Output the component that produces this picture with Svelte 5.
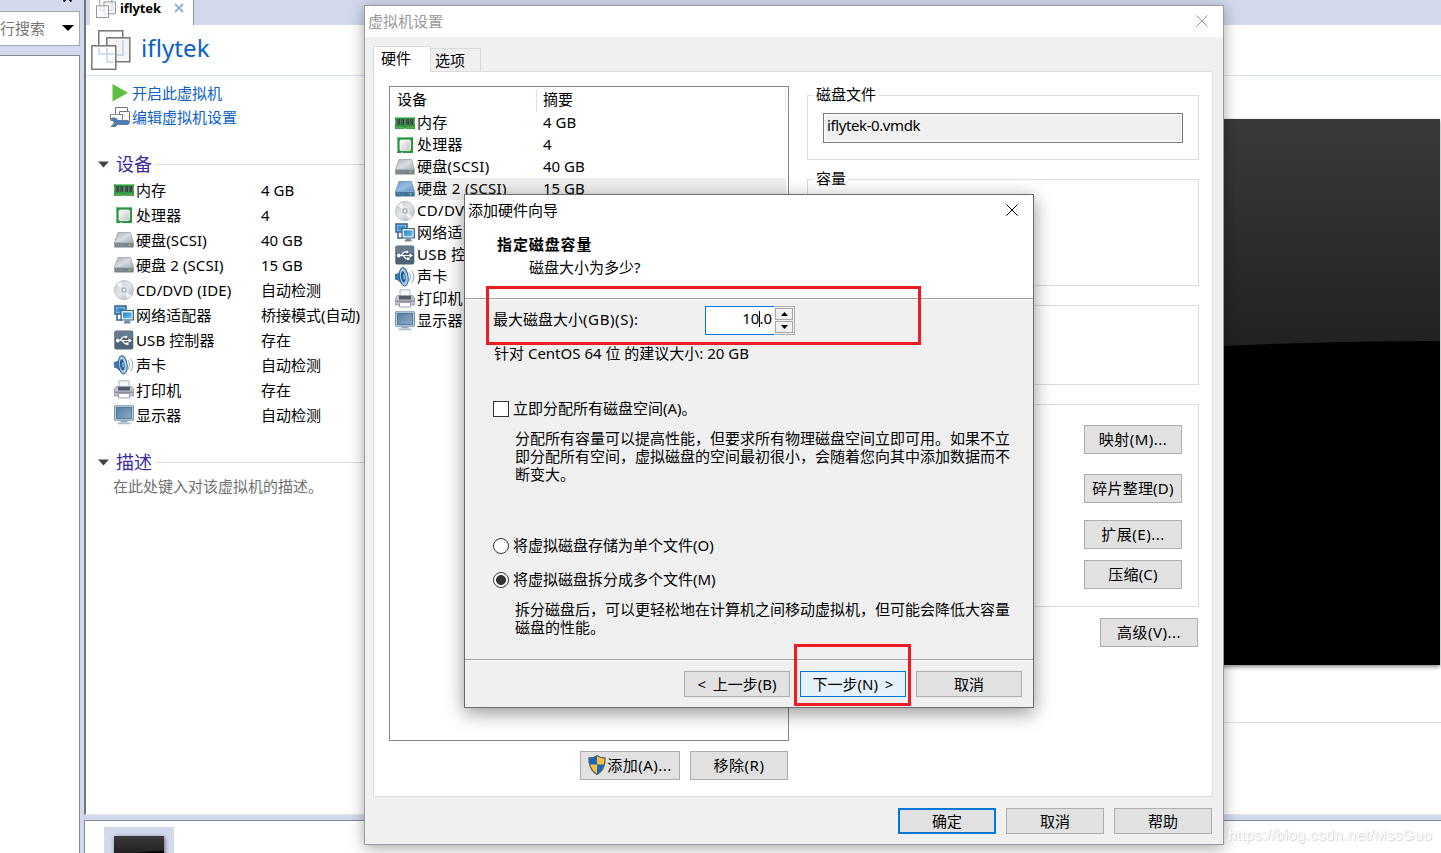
<script>
  const devices = [
    { icon: 'memory', name: '内存', summary: '4 GB' },
    { icon: 'cpu', name: '处理器', summary: '4' },
    { icon: 'disk', name: '硬盘(SCSI)', summary: '40 GB' },
    { icon: 'disk', name: '硬盘 2 (SCSI)', summary: '15 GB', selected: true },
    { icon: 'cd', name: 'CD/DVD (IDE)', summary: '自动检测' },
    { icon: 'network', name: '网络适配器', summary: '桥接模式(自动)' },
    { icon: 'usb', name: 'USB 控制器', summary: '存在' },
    { icon: 'sound', name: '声卡', summary: '自动检测' },
    { icon: 'printer', name: '打印机', summary: '存在' },
    { icon: 'display', name: '显示器', summary: '自动检测' }
  ]

  let allocateNow = $state(false)
  let layout = $state('split')
</script>

{#snippet vmIcon()}
  <svg class="vm-icon" viewBox="0 0 40 40" fill="#fff" stroke="#777" stroke-width="1.5">
    <rect x="7.8" y=".8" width="24" height="24" />
    <rect x="15.8" y="7.8" width="23" height="24" fill="#f4f4f4" />
    <path d="M32 10v15h-6" fill="none" stroke="#b9cde6" />
    <rect x=".8" y="15.8" width="24" height="23.5" fill="#fdfdfd" />
    <path d="M8 18v6h15M16 18v14h7" fill="none" stroke="#c3d5ea" />
  </svg>
{/snippet}

{#snippet closeIcon()}
  <svg class="close-icon" viewBox="0 0 12 12" fill="none" stroke="currentColor"><path d="M.4.4l11.2 11.2M11.6.4L.4 11.6" /></svg>
{/snippet}

{#snippet deviceIcon(name, selected)}
  <svg class="device-icon" viewBox="0 0 20 20">
    {#if name === 'memory'}
      <path d="M0 4h20v4l-.7 1 .7 1v6H11l-1-1-1 1H0v-6l.7-1-.7-1z" fill="#2f9a46" />
      <path d="M.5 4.5h19" stroke="#7fce83" />
      <path d="M2 6h3v6H2zM6 6h3v6H6zM11 6h3v6h-3zM15 6h3v6h-3z" fill="#3c3f42" />
      <path d="M3 6v6M7 6v6M12 6v6M16 6v6" stroke="#777" stroke-width=".6" />
      <path d="M1.5 14.8h7M11.5 14.8h7" stroke="#d9c463" stroke-dasharray="1 1" />
    {:else if name === 'cpu'}
      <path d="M2 2h16v16H8l-1-1-1 1H2z" fill="#2c9444" />
      <path d="M2.5 17V2.5h15" fill="none" stroke="#71c77d" />
      <rect x="5" y="5" width="10.5" height="10.5" rx="1" fill="url(#cpu-face)" stroke="#f8f8f8" stroke-width=".8" />
    {:else if name === 'disk'}
      <path d="M4 2.500h12.500l3 10H.5z" fill={selected ? 'url(#disk-blue)' : 'url(#disk-grey)'} stroke={selected ? '#5484ad' : '#9298a0'} stroke-width=".7" />
      <path d="M.3 12.300h19.400v5.200H.3z" fill={selected ? '#3c6f9b' : '#7b828b'} />
      <path d="M.5 12.600h19" stroke={selected ? '#9cc2e0' : '#bec4ca'} stroke-width=".7" />
      <path d="M2 15h7" stroke={selected ? '#6c9fc6' : '#9ea4ab'} stroke-dasharray="1 1" />
      <circle cx="15.500" cy="15" r="1" fill="#8fe04e" />
    {:else if name === 'cd'}
      <circle cx="10" cy="10" r="9.5" fill="url(#cd-face)" stroke="#a9b0b8" stroke-width=".7" />
      <path d="M10 10L2.5 4.5A9 9 0 0 1 7 1.5zM10 10l7.5 5.5a9 9 0 0 1-4.500 3z" fill="#fff" opacity=".75" />
      <circle cx="10" cy="10" r="3.8" fill="#c0c8d0" stroke="#e9edf1" />
      <circle cx="10" cy="10" r="1.700" fill="#fff" stroke="#87909a" stroke-width=".6" />
    {:else if name === 'network'}
      <path d="M1 1h11v8H1z" fill="#a8d3f1" stroke="#2a5f8f" stroke-width="1.500" />
      <path d="M2.500 2.500h8v5h-8z" fill="#3f8fcc" />
      <path d="M3 9v6h5" fill="none" stroke="#35658e" stroke-width="1.500" />
      <path d="M7 5.500h12.300v9.500H7z" fill="#d9effc" stroke="#3c5e7c" stroke-width="1.200" />
      <path d="M9 7.500h8.500v5.700H9z" fill="url(#screen-blue)" />
      <path d="M9.500 18.500h7.500l-1.500-3h-4.500z" fill="#77899b" />
    {:else if name === 'usb'}
      <rect x=".3" y=".5" width="19" height="19" rx="2" fill="#4c6378" />
      <path d="M.8 8V2.500q0-1.500 1.500-1.500h15q1.500 0 1.500 1.500V8z" fill="#657c91" />
      <path d="M3 10.500h12M6 10.500l3-3.500h2.500M8 10.500l3 3.200h2" fill="none" stroke="#fff" stroke-width="1.200" />
      <path d="M14.500 8.200l3.500 2.300-3.500 2.300z" fill="#fff" />
      <circle cx="3.800" cy="10.500" r="1.900" fill="#fff" />
      <circle cx="12" cy="7" r="1.300" fill="#fff" />
      <path d="M12 12.500h2.500V15H12z" fill="#fff" />
    {:else if name === 'sound'}
      <path d="M0 7l3-.8L9 .5V19l-6-5.500-3-1z" fill="#3e78a6" />
      <ellipse cx="8.800" cy="9.800" rx="4.300" ry="9.200" fill="#a9cdea" stroke="#315f88" transform="rotate(-8 9 10)" />
      <ellipse cx="8.300" cy="9.800" rx="2.300" ry="5.600" fill="#245a8b" transform="rotate(-8 9 10)" />
      <ellipse cx="9" cy="9.800" rx="1.200" ry="3" fill="#67add9" />
      <path d="M14.300 5.500q3 4.300 0 8.600M16.500 3.500q4.600 6.300 0 12.600" fill="none" stroke="#8ca8c4" />
    {:else if name === 'printer'}
      <path d="M5 .8h10V8H5z" fill="#f3f8ff" stroke="#9ba4b6" stroke-width=".8" />
      <path d="M2.500 6.500h15L19.600 9v7H.4V9z" fill="#c4c5d2" stroke="#8f91a0" stroke-width=".8" />
      <path d="M4 7h12v3.500H4z" fill="#555868" />
      <path d="M1 11.500h18v1.500H1z" fill="#8a8d9c" />
      <path d="M4.500 13.500h11V18h-11z" fill="#fafaff" stroke="#8d8fa2" stroke-width=".8" />
      <path d="M16.500 9.500h2" stroke="#7ad37b" />
    {:else}
      <path d="M.6.8h18.800v14.400H.6z" fill="#c9d8e5" stroke="#6e8fac" />
      <path d="M2.500 2.500h15v11h-15z" fill="url(#screen-slate)" stroke="#436a8d" stroke-width=".8" />
      <path d="M6.500 15.500h7v2h-7z" fill="#8eabc4" />
      <path d="M3.500 17.500h13v1.800h-13z" fill="#a9c0d3" />
    {/if}
  </svg>
{/snippet}

<svg class="defs" aria-hidden="true">
  <defs>
    <linearGradient id="cpu-face" x2="1" y2="1"><stop stop-color="#fff" /><stop offset="1" stop-color="#c4c4c4" /></linearGradient>
    <linearGradient id="disk-grey" x2="1" y2="1"><stop stop-color="#a9afb6" /><stop offset=".5" stop-color="#d9dde1" /><stop offset="1" stop-color="#a6acb4" /></linearGradient>
    <linearGradient id="disk-blue" x2="1" y2="1"><stop stop-color="#6a9cc8" /><stop offset=".5" stop-color="#94bde0" /><stop offset="1" stop-color="#5e93c0" /></linearGradient>
    <linearGradient id="cd-face" x2="1" y2="1"><stop stop-color="#c2c8ce" /><stop offset=".5" stop-color="#e3e7eb" /><stop offset="1" stop-color="#a8b0b9" /></linearGradient>
    <linearGradient id="screen-blue" x2="1" y2="1"><stop stop-color="#2b7fc2" /><stop offset="1" stop-color="#6cc2ee" /></linearGradient>
    <linearGradient id="screen-slate" x2="1" y2="1"><stop stop-color="#587fa2" /><stop offset="1" stop-color="#8dabc5" /></linearGradient>
    <linearGradient id="glass" x2="0" y2="1"><stop stop-color="#3a3a3a" /><stop offset="1" stop-color="#1e1e1e" /></linearGradient>
  </defs>
</svg>

<div class="desktop">
  <aside class="library">
    <div class="library-top">
      <svg width="9" height="9" viewBox="0 0 9 9" stroke="#000" stroke-width="1.800"><path d="M.5.5l8 8M8.500.5l-8 8" /></svg>
    </div>
    <div class="search">
      <span>行搜索</span>
      <svg width="12" height="6" viewBox="0 0 12 6"><path d="M0 0h12L6 6z" /></svg>
    </div>
    <div class="tree"></div>
  </aside>

  <main class="workspace">
    <div class="tab-strip">
      <div class="vm-tab">
        {@render vmIcon()}
        <span>iflytek</span>
        <svg class="tab-close" viewBox="0 0 10 10" stroke="#8fb1cf" stroke-width="2"><path d="M1 1l8 8M9 1L1 9" /></svg>
      </div>
    </div>

    <div class="view">
      <header class="view-header">
        {@render vmIcon()}
        <h1>iflytek</h1>
      </header>
      <div class="view-body">
        <div class="details">
          <div class="actions">
            <a href="#start"><svg width="20" height="20" viewBox="0 0 20 20"><path d="M2.500 1L18 9.800 2.500 18.600z" fill="#5fbf40" /></svg>开启此虚拟机</a>
            <a href="#edit">
              <svg width="20" height="20" viewBox="0 0 20 20" fill="#fff" stroke="#777">
                <path d="M5.500.5h12v10h-12z" />
                <path d="M9.500 4.500h10v11h-10z" fill="#f7f7f7" />
                <path d="M.5 7.500h12v6H.5z" stroke="#8b8b8b" />
                <path d="M1 11.500q5.500-1.500 6.500 2h10q1.500 0 1.500 2t-1.500 2H7.500q-1.500 3-6.500 2l3-2.500q1-1.500-.5-2.500z" fill="#4a7db5" />
                <path d="M1 11.500q5.500-1.500 6.500 2h10q1.500 0 1.500 2t-1.500 2H7.500q-1.500 3-6.500 2l3-2.500q1-1.500-.5-2.500z" fill="none" stroke="#4a7db5" stroke-width=".6" />
              </svg>编辑虚拟机设置</a>
          </div>
          <section class="section">
            <h2><svg width="11" height="7" viewBox="0 0 11 7"><path d="M0 .5h11L5.500 6.500z" fill="#444" /></svg><span>设备</span></h2>
            {#each devices as device}
              <div class="device">
                {@render deviceIcon(device.icon, false)}
                <span class="device-name">{device.name}</span>
                <span>{device.summary}</span>
              </div>
            {/each}
          </section>
          <section class="section description">
            <h2><svg width="11" height="7" viewBox="0 0 11 7"><path d="M0 .5h11L5.500 6.500z" fill="#444" /></svg><span>描述</span></h2>
            <p>在此处键入对该虚拟机的描述。</p>
          </section>
        </div>
        <div class="preview">
          <svg class="vm-screen" viewBox="0 0 640 546">
            <path d="M0 0h640v546H0z" />
            <path d="M0 0h640v222Q350 222 0 260z" fill="url(#glass)" />
          </svg>
        </div>
      </div>
    </div>

    <div class="thumbnails">
      <div class="thumb">
        <svg width="50" height="40" viewBox="0 0 50 40"><path d="M0 0h50v40H0z" /><path d="M0 0h50v15Q28 15 0 20z" fill="url(#glass)" /></svg>
      </div>
    </div>
  </main>

  <div class="window settings">
    <div class="title-bar"><span>虚拟机设置</span>{@render closeIcon()}</div>
    <div class="settings-body">
      <div class="tabs">
        <div class="tab active">硬件</div>
        <div class="tab">选项</div>
      </div>
      <div class="page">
        <div class="hardware">
          <div class="device-list">
            <div class="list-head"><span>设备</span><span>摘要</span></div>
            {#each devices as device}
              <div class="list-row">
                {@render deviceIcon(device.icon, device.selected)}
                <div class="cells" class:selected={device.selected}>
                  <span>{device.name}</span>
                  <span>{device.summary}</span>
                </div>
              </div>
            {/each}
          </div>
          <div class="list-buttons">
            <button class="btn add">
              <svg width="18" height="20" viewBox="0 0 18 20">
                <path d="M9 .7Q5.500 3 1 3q-.3 12 8 16.300Q17.300 15 17 3q-4.500 0-8-2.300z" fill="#f8bf3b" />
                <path d="M9 .7Q5.500 3 1 3q0 3.500.8 6.500H9zM9 9.500h7.200q-1.700 6.700-7.200 9.800z" fill="#1767c0" />
                <path d="M9 .7Q5.500 3 1 3q-.3 12 8 16.300Q17.300 15 17 3q-4.500 0-8-2.300z" fill="none" stroke="#5a6068" stroke-width="1.300" />
              </svg>添加(A)...</button>
            <button class="btn">移除(R)</button>
          </div>
        </div>

        <div class="properties">
          <fieldset class="file">
            <legend>磁盘文件</legend>
            <div class="file-name">iflytek-0.vmdk</div>
          </fieldset>
          <fieldset class="capacity"><legend>容量</legend></fieldset>
          <fieldset class="info"></fieldset>
          <fieldset class="tools">
            <button class="btn">映射(M)...</button>
            <button class="btn">碎片整理(D)</button>
            <button class="btn">扩展(E)...</button>
            <button class="btn">压缩(C)</button>
          </fieldset>
          <button class="btn advanced">高级(V)...</button>
        </div>
      </div>
      <div class="settings-footer">
        <button class="btn default">确定</button>
        <button class="btn">取消</button>
        <button class="btn">帮助</button>
      </div>
    </div>
  </div>

  <div class="window wizard">
    <div class="title-bar"><span>添加硬件向导</span>{@render closeIcon()}</div>
    <div class="wizard-head">
      <h3>指定磁盘容量</h3>
      <p>磁盘大小为多少?</p>
    </div>
    <div class="wizard-body">
      <div class="size-row">
        <span class="size-label">最大磁盘大小<span>(GB)(S):</span></span>
        <div class="spinner">
          <div class="value"><span>10<i></i>.0</span></div>
          <div class="steps">
            <button aria-label="增大"><svg width="7" height="4" viewBox="0 0 7 4"><path d="M3.500 0L7 4H0z" /></svg></button>
            <button aria-label="减小"><svg width="7" height="4" viewBox="0 0 7 4"><path d="M0 0h7L3.500 4z" /></svg></button>
          </div>
        </div>
      </div>
      <p class="hint">针对 CentOS 64 位 的建议大小: 20 GB</p>
      <label class="check"><input type="checkbox" bind:checked={allocateNow} /><span>立即分配所有磁盘空间(A)。</span></label>
      <p class="note">分配所有容量可以提高性能，但要求所有物理磁盘空间立即可用。如果不立<br />即分配所有空间，虚拟磁盘的空间最初很小，会随着您向其中添加数据而不<br />断变大。</p>
      <label class="radio first"><input type="radio" value="single" bind:group={layout} /><span>将虚拟磁盘存储为单个文件(O)</span></label>
      <label class="radio"><input type="radio" value="split" bind:group={layout} /><span>将虚拟磁盘拆分成多个文件(M)</span></label>
      <p class="note last">拆分磁盘后，可以更轻松地在计算机之间移动虚拟机，但可能会降低大容量<br />磁盘的性能。</p>
    </div>
    <div class="wizard-footer">
      <button class="btn">&lt; 上一步(B)</button>
      <button class="btn focus">下一步(N) &gt;</button>
      <button class="btn">取消</button>
    </div>
  </div>

  <div class="mark mark-size"></div>
  <div class="mark mark-next"></div>
  <div class="watermark">https://blog.csdn.net/MssGuo</div>
</div>

<style>
  :global(body) {
    margin: 0;
    overflow: hidden;
  }

  .desktop {
    position: relative;
    display: flex;
    gap: 4px;
    width: 1441px;
    height: 853px;
    overflow: hidden;
    background: #d3d9ed;
    color: #000;
    font-family: 'Noto Sans', 'Noto Sans CJK SC', sans-serif;
    font-size: 15px;
    line-height: 20px;
    white-space: nowrap;
  }

  .desktop * {
    box-sizing: border-box;
  }

  h1, h2, h3, p, fieldset {
    margin: 0;
    padding: 0;
    font-weight: 400;
  }

  svg {
    display: block;
    flex-shrink: 0;
  }

  .defs {
    position: absolute;
    width: 0;
    height: 0;
  }

  .device-icon {
    width: 20px;
    height: 20px;
  }

  /* library sidebar */
  .library {
    width: 80px;
    flex-shrink: 0;
    display: flex;
    flex-direction: column;
  }

  .library-top {
    height: 11px;
    padding-left: 63px;
  }

  .library-top svg {
    margin-top: -7px;
  }

  .search {
    height: 35px;
    display: flex;
    align-items: center;
    gap: 17px;
    padding-bottom: 1px;
    background: #fff;
    border: 1px solid #a2a6b0;
    border-left: 0;
    color: #777;
  }

  .tree {
    flex: 1;
    margin-top: 9px;
    background: #fff;
    border: solid #828790;
    border-width: 1px 1px 0 0;
  }

  /* vm view */
  .workspace {
    flex: 1;
    min-width: 0;
    display: flex;
    flex-direction: column;
  }

  .tab-strip {
    height: 25px;
    flex-shrink: 0;
    padding-left: 4px;
    border-left: 2px solid #72757e;
  }

  .vm-tab {
    display: flex;
    align-items: flex-start;
    width: 104px;
    height: 25px;
    padding-left: 6px;
    background: #fff;
    border-right: 1px solid #8c93ab;
    font-size: 13px;
    font-weight: 700;
    line-height: 17px;
  }

  .vm-tab .vm-icon {
    width: 20px;
    height: 20px;
    margin: -2px 4px 0 0;
  }

  .vm-tab span {
    width: 54px;
    letter-spacing: -.1px;
  }

  .tab-close {
    width: 10px;
    height: 10px;
    margin-top: 3px;
  }

  .view {
    height: 790px;
    flex-shrink: 0;
    background: #fff;
    border-left: 2px solid #72757e;
    border-bottom: 1px solid #e3e3e3;
  }

  .view-header {
    display: flex;
    align-items: center;
    gap: 10px;
    height: 51px;
    padding-left: 5px;
    border-bottom: 1px solid #d6e0ef;
  }

  .view-header .vm-icon {
    width: 40px;
    height: 40px;
  }

  h1 {
    margin-top: -5px;
    color: #0a60c8;
    font-size: 24px;
    line-height: 30px;
    letter-spacing: .1px;
  }

  .view-body {
    display: flex;
  }

  .details {
    width: 300px;
  }

  .actions {
    padding: 5px 0 0 24px;
  }

  .actions a {
    display: flex;
    align-items: center;
    gap: 2px;
    height: 24px;
    color: #0a60c8;
    text-decoration: none;
  }

  .section {
    padding-top: 22px;
  }

  .section h2 {
    display: flex;
    align-items: center;
    height: 26px;
    padding-left: 12px;
    color: #3b2a9c;
    font-size: 18px;
    line-height: 26px;
  }

  .section h2 span {
    padding: 1px 3px 0 7px;
    line-height: 25px;
  }

  .section h2::after {
    content: '';
    flex: 1;
    height: 1px;
    background: #dcdcdc;
  }

  .device {
    display: flex;
    align-items: center;
    height: 25px;
    padding-left: 28px;
  }

  .device-name {
    width: 127px;
    padding-left: 2px;
    letter-spacing: .1px;
  }

  .description p {
    padding: 1px 0 0 27px;
    color: #707070;
  }

  .preview {
    flex: 1;
    display: flex;
    justify-content: flex-end;
    align-items: flex-start;
    height: 647px;
    padding: 43px 1px 0 0;
    border-bottom: 1px solid #dfdfdf;
  }

  .vm-screen {
    width: 640px;
    height: 546px;
    box-shadow: 0 2px 4px rgba(0, 0, 0, .45);
  }

  .thumbnails {
    flex: 1;
    min-height: 0;
    margin-top: 5px;
    padding: 6px 0 0 19px;
    background: #fff;
    border: solid #828799;
    border-width: 1px 0 0 1px;
  }

  .thumb {
    width: 70px;
    height: 40px;
    padding: 9px 10px 0;
    background: #d3d9ed;
  }

  .thumb svg {
    box-shadow: 1px 1px 4px rgba(0, 0, 0, .5);
  }

  /* dialogs */
  .window {
    position: absolute;
    display: flex;
    flex-direction: column;
    background: #f0f0f0;
  }

  .title-bar {
    display: flex;
    justify-content: space-between;
    background: #fff;
  }

  .close-icon {
    width: 12px;
    height: 12px;
  }

  .btn {
    display: flex;
    align-items: center;
    justify-content: center;
    width: 98px;
    height: 29px;
    padding: 0 0 2px;
    background: #e1e1e1;
    border: 1px solid #adadad;
    color: #000;
    font: inherit;
    letter-spacing: .5px;
  }

  .settings {
    left: 364px;
    top: 5px;
    width: 860px;
    height: 840px;
    border: 1px solid #9a9aa4;
    box-shadow: 0 3px 14px rgba(0, 0, 0, .35);
  }

  .settings .title-bar {
    height: 31px;
    padding: 5px 15px 0 3px;
    color: #999;
  }

  .settings .close-icon {
    margin-top: 4px;
  }

  .settings-body {
    padding: 9px 10px 0 8px;
  }

  .tabs {
    display: flex;
    align-items: flex-end;
    height: 25px;
  }

  .tab {
    width: 50px;
    height: 23px;
    padding: 1px 0 0 4px;
    border: 1px solid #d9d9d9;
    border-width: 1px 1px 0 0;
  }

  .tab.active {
    z-index: 1;
    width: 58px;
    height: 26px;
    margin-bottom: -1px;
    padding-left: 7px;
    background: #fff;
    border-left-width: 1px;
  }

  .page {
    display: flex;
    gap: 18px;
    height: 726px;
    padding: 14px 13px 0 15px;
    background: #fff;
    border: 1px solid #dcdcdc;
  }

  .hardware {
    width: 400px;
  }

  .device-list {
    height: 655px;
    border: 1px solid #828790;
    padding: 0 2px 0 5px;
  }

  .list-head {
    display: flex;
    height: 25px;
    padding-top: 2px;
    line-height: 20px;
  }

  .list-head span {
    width: 142px;
    height: 23px;
    padding-left: 2px;
    border-right: 1px solid #e2e2e2;
  }

  .list-head span:last-child {
    flex: 1;
    padding-left: 6px;
  }

  .list-row {
    display: flex;
    align-items: center;
    height: 22px;
  }

  .cells {
    flex: 1;
    display: flex;
    height: 22px;
    padding-left: 2px;
    line-height: 21px;
  }

  .cells.selected {
    background: #efefef;
  }

  .cells span:first-child {
    width: 126px;
    letter-spacing: .3px;
  }

  .list-buttons {
    display: flex;
    justify-content: flex-end;
    gap: 10px;
    padding: 10px 1px 0 0;
  }

  .btn.add {
    width: 100px;
    gap: 1px;
  }

  .properties {
    flex: 1;
  }

  fieldset {
    position: relative;
    border: 1px solid #dcdcdc;
  }

  /* the caption sits on the frame line */
  legend {
    position: absolute;
    left: 5px;
    top: -12px;
    padding: 0 3px;
    background: #fff;
  }

  .file {
    height: 65px;
    margin-top: 9px;
    padding: 17px 15px 0;
  }

  .file-name {
    height: 30px;
    padding: 1px 3px;
    background: #f0f0f0;
    border: 1px solid #7a7a7a;
    box-shadow: inset 0 0 0 1px #fff;
    line-height: 20px;
    letter-spacing: -.4px;
  }

  .capacity {
    height: 107px;
    margin-top: 19px;
  }

  .info {
    height: 80px;
    margin-top: 19px;
  }

  .tools {
    display: flex;
    flex-direction: column;
    align-items: flex-end;
    height: 203px;
    margin-top: 19px;
    padding: 20px 16px 0 0;
  }

  .tools .btn:nth-child(2) {
    margin-top: 20px;
    letter-spacing: .2px;
  }

  .tools .btn:nth-child(3) {
    margin-top: 17px;
  }

  .tools .btn:nth-child(4) {
    margin-top: 11px;
    letter-spacing: .2px;
  }

  .advanced {
    margin: 11px 1px 0 auto;
  }

  .settings-footer {
    display: flex;
    justify-content: flex-end;
    gap: 10px;
    padding: 11px 1px 0 0;
  }

  .settings-footer .btn {
    height: 26px;
    padding: 0;
    letter-spacing: 0;
  }

  .btn.default {
    border: 2px solid #0078d7;
  }

  .wizard {
    left: 464px;
    top: 194px;
    width: 570px;
    height: 514px;
    border: 1px solid #6c6c6c;
    box-shadow: 0 5px 18px rgba(0, 0, 0, .42);
  }

  .wizard .title-bar {
    height: 34px;
    padding: 5px 15px 0 3px;
  }

  .wizard .close-icon {
    margin-top: 4px;
  }

  .wizard-head {
    height: 70px;
    padding: 5px 0 0 32px;
    background: #fff;
    border-bottom: 1px solid #a0a0a0;
  }

  .wizard-head h3 {
    font-size: 15px;
    font-weight: 700;
    letter-spacing: .9px;
  }

  .wizard-head p {
    padding: 3px 0 0 32px;
    line-height: 20px;
  }

  .wizard-body {
    height: 361px;
    padding: 6px 0 0 28px;
    border-top: 1px solid #fff;
    border-bottom: 1px solid #a0a0a0;
  }

  .size-row {
    display: flex;
    height: 29px;
  }

  .size-label {
    width: 212px;
    padding-top: 3px;
  }

  .size-label span {
    letter-spacing: .6px;
  }

  .spinner {
    display: flex;
    width: 90px;
  }

  .value {
    width: 69px;
    padding: 2px 2px 0 0;
    background: #fff;
    border: solid #0078d7;
    border-width: 1px 0 1px 1px;
    line-height: 19px;
    text-align: right;
  }

  .value i {
    display: inline-block;
    width: 1px;
    height: 16px;
    margin-right: -1px;
    background: #000;
    vertical-align: -3px;
  }

  .steps {
    display: flex;
    flex-direction: column;
    gap: 1px;
    width: 21px;
    padding: 1px;
    border: solid #aeb0b5;
    border-width: 1px 1px 1px 0;
  }

  .steps button {
    flex: 1;
    display: flex;
    align-items: center;
    justify-content: center;
    padding: 0;
    background: #f0f0f0;
    border: 1px solid #a9a9a9;
  }

  .hint {
    padding: 8px 0 0 1px;
  }

  .check,
  .radio {
    display: flex;
    align-items: center;
    gap: 4px;
    height: 20px;
  }

  .check span,
  .radio span {
    padding-bottom: 1px;
    line-height: 19px;
  }

  .check {
    margin-top: 36px;
  }

  input {
    appearance: none;
    width: 16px;
    height: 16px;
    margin: 0;
    background: #fff;
    border: 1px solid #333;
  }

  .radio input {
    border-radius: 50%;
  }

  .radio input:checked {
    background: radial-gradient(circle, #333 0 4.600px, #fff 5.300px);
  }

  .note {
    height: 54px;
    margin-top: 10px;
    padding-left: 22px;
    line-height: 18px;
  }

  .radio.first {
    margin: 53px 0 14px;
  }

  .wizard-footer {
    display: flex;
    justify-content: flex-end;
    gap: 10px;
    padding: 10px 11px 0 0;
    border-top: 1px solid #fff;
  }

  .wizard-footer .btn {
    width: 106px;
    height: 26px;
    padding: 0;
    letter-spacing: 0;
    word-spacing: 3px;
  }

  .btn.focus {
    background: #e5f1fb;
    border-color: #0078d7;
  }

  /* annotations over the dialogs */
  .mark {
    position: absolute;
    border: 3px solid #ed1c24;
  }

  .mark-size {
    left: 486px;
    top: 286px;
    width: 435px;
    height: 59px;
  }

  .mark-next {
    left: 794px;
    top: 644px;
    width: 117px;
    height: 62px;
  }

  .watermark {
    position: absolute;
    left: 1228px;
    top: 825px;
    color: #fdfdfd;
    font-family: 'Liberation Sans', sans-serif;
    font-size: 15px;
    letter-spacing: .35px;
    text-shadow: 1px 1px 1px #d4d4d4, 0 0 1px #e0e0e0;
  }
</style>
